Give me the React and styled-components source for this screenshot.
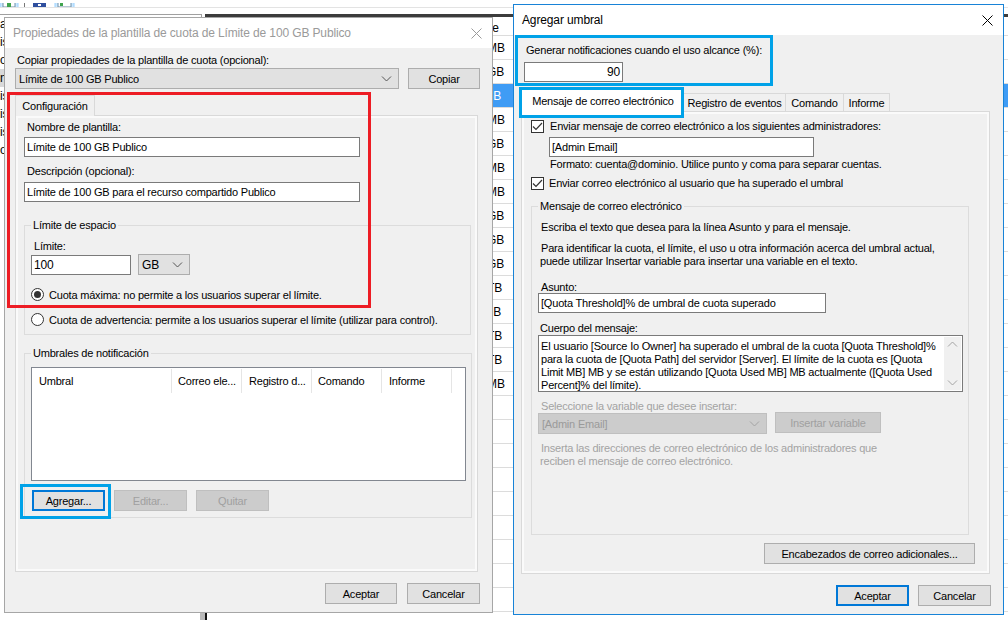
import React from 'react';
import styled, { createGlobalStyle } from 'styled-components';

const Global = createGlobalStyle`
  html, body { margin: 0; padding: 0; background: #fff; }
  body { font-family: "Liberation Sans", Arial, sans-serif; font-size: 11px; letter-spacing: -0.2px; color: #000; overflow: hidden; }
  * { box-sizing: border-box; }
`;

const Desktop = styled.div`position: relative; width: 1008px; height: 620px; overflow: hidden; background: #fff;`;
const Toolbar = styled.div`position: absolute; left: 0; top: 0; width: 1008px; height: 8px; border-bottom: 1px solid #e3e3e3; overflow: hidden;`;
const BackPane = styled.div`position: absolute; left: 0; top: 14px; width: 202px; height: 606px; border-top: 1px solid #a0a0a0; border-right: 1px solid #a0a0a0;`;
const BackRow = styled.div`height: 18px; line-height: 18px; padding-left: 0; font-size: 12px; background: ${p => (p.$on ? '#d9d9d9' : 'transparent')};`;
const BackTable = styled.div`position: absolute; left: 205px; top: 14px; width: 803px; bottom: 0; border-top: 3px solid #3c3c3c;`;
const BackHead = styled.div`height: 19px; line-height: 22px; padding-left: 284px; border-bottom: 1px solid #dcdcdc; background: #fff; font-size: 12px;`;
const BackCell = styled.div`
  height: 24px; line-height: 24px; border-bottom: 1px solid #dcdcdc; text-align: left;
  padding-left: ${p => p.$in ? 279 : 282}px; font-size: 12px; letter-spacing: 0;
  background: ${p => (p.$on ? '#3f9cf5' : '#fff')}; color: ${p => (p.$on ? '#fff' : '#000')};
`;
const Splitter = styled.div`position: absolute; left: 200px; top: 600px; width: 7px; height: 20px; background: #b8b8b8; border-right: 2px solid #111;`;

const Dialog = styled.div`
  position: absolute; left: ${p => p.$x}px; top: ${p => p.$y}px; width: ${p => p.$w}px; height: ${p => p.$h}px;
  background: #f0f0f0; border: 1px solid ${p => p.$c};
`;
const TitleBar = styled.div`
  height: 30px; background: #fff; display: flex; align-items: center; justify-content: space-between;
  padding: 0 ${p => p.$pr}px 0 ${p => p.$pl}px; color: ${p => p.$c}; font-size: 12px; letter-spacing: -0.13px; white-space: nowrap;
`;
const Body = styled.div`padding: ${p => p.$p};`;
const Txt = styled.div`
  height: ${p => p.$h || 14}px; line-height: ${p => p.$h || 14}px; white-space: nowrap;
  margin-top: ${p => p.$mt || 0}px; padding-left: ${p => p.$pl || 0}px;
  color: ${p => (p.$off ? '#a3a3a3' : '#000')};
`;
const Field = styled.div`
  width: ${p => p.$w}px; height: ${p => p.$h || 20}px; line-height: ${p => (p.$h || 20) - 2}px;
  margin-top: ${p => p.$mt || 0}px; margin-left: ${p => p.$ml || 0}px;
  background: #fff; border: 1px solid #7a7a7a; padding: 0 2px; white-space: nowrap; text-align: ${p => p.$right ? 'right' : 'left'};
  font-size: ${p => p.$fs || 11}px; flex: none;
`;
const Row = styled.div`
  display: flex; align-items: ${p => p.$al || 'flex-start'}; gap: ${p => p.$gap || 0}px;
  margin-top: ${p => p.$mt || 0}px; margin-left: ${p => p.$ml || 0}px; justify-content: ${p => p.$jc || 'flex-start'};
  padding-right: ${p => p.$pr || 0}px; white-space: nowrap;
`;
const Combo = styled.div`
  width: ${p => p.$w}px; height: 21px; flex: none; display: flex; align-items: center; justify-content: space-between;
  padding: 0 6px 0 3px; margin-top: ${p => p.$mt || 0}px; font-size: ${p => p.$fs || 11}px;
  background: ${p => (p.$off ? '#cccccc' : '#e1e1e1')}; border: 1px solid ${p => (p.$off ? '#bfbfbf' : '#adadad')};
  color: ${p => (p.$off ? '#9a9a9a' : '#000')};
`;
const Btn = styled.div`
  width: ${p => p.$w || 73}px; height: 21px; flex: none; display: flex; align-items: center; justify-content: center; white-space: nowrap;
  background: ${p => (p.$off ? '#cccccc' : '#e1e1e1')};
  border: ${p => (p.$main ? '2px solid #0078d7' : `1px solid ${p.$off ? '#bfbfbf' : '#adadad'}`)};
  color: ${p => (p.$off ? '#a0a0a0' : '#000')};
`;
const TabStrip = styled.div`display: flex; align-items: flex-end; height: ${p => p.$h}px; margin-top: ${p => p.$mt}px; padding-left: ${p => p.$pl || 0}px; position: relative; z-index: 1;`;
const Tab = styled.div`
  height: ${p => p.$h || 18}px; width: ${p => p.$w}px; display: flex; align-items: center; justify-content: center; white-space: nowrap;
  background: #f0f0f0; border: 1px solid #d9d9d9; border-left-width: ${p => p.$first ? 1 : 0}px; border-bottom: none;
`;
const ActiveTab = styled.div`
  height: 26px; width: ${p => p.$w}px; margin-bottom: -4px; display: flex; align-items: center; justify-content: center; white-space: nowrap;
  background: #fff; padding-bottom: 2px;
`;
const Panel = styled.div`
  height: ${p => p.$h}px; width: ${p => p.$w}px; margin-top: ${p => p.$mt || 0}px;
  border: 1px solid #d9d9d9; box-shadow: inset 0 0 0 2px #fafafa;
  padding: ${p => p.$p};
`;
const Group = styled.fieldset`
  margin: ${p => p.$mt}px 0 0 ${p => p.$ml || 0}px; width: ${p => p.$w}px; height: ${p => p.$h}px;
  border: 1px solid #dcdcdc; padding: 0 6px; min-width: 0; display: block;
`;
const Legend = styled.legend`
  padding: 0 2px; margin-left: 0; height: 14px; line-height: 15px; white-space: nowrap; font-size: 11px;
`;
const RadioDot = styled.span`
  width: 13px; height: 13px; border-radius: 50%; border: 1px solid #333; background: #fff; display: flex; align-items: center; justify-content: center; flex: none;
  &::after { content: ''; width: 7px; height: 7px; border-radius: 50%; background: ${p => (p.$on ? '#333' : 'transparent')}; }
`;
const Check = styled.span`width: 13px; height: 13px; flex: none; border: 1px solid #333; background: #fff; display: flex; align-items: center; justify-content: center;`;
const ListView = styled.div`width: 435px; height: 114px; margin-top: 7px; background: #fff; border: 1px solid #828790; display: flex; align-items: flex-start; padding-top: 1px;`;
const ColHead = styled.div`width: ${p => p.$w}px; height: 24px; line-height: 24px; padding-left: ${p => p.$pl}px; border-right: 1px solid #e5e5e5; white-space: nowrap; flex: none;`;
const MemoBox = styled.div`width: 425px; height: 57px; background: #fff; border: 1px solid #7a7a7a; display: flex; justify-content: space-between;`;
const MemoText = styled.div`padding: 4px 0 0 2px; line-height: 13px; white-space: nowrap;`;
const Scroll = styled.div`width: 17px; background: #f0f0f0; margin: 1px; display: flex; flex-direction: column; justify-content: space-between; align-items: center; padding: 4px 0;`;
const Note = styled.div`
  position: absolute; left: ${p => p.$x}px; top: ${p => p.$y}px; width: ${p => p.$w}px; height: ${p => p.$h}px;
  border: 3px solid ${p => p.$c || '#00a2e8'}; z-index: 5; pointer-events: none;
`;

const Chev = ({ up, c = '#555', w = 11 }) => (
  <svg width={w} height="6" viewBox="0 0 11 6"><path d={up ? 'M1 5.5 5.5 1 10 5.5' : 'M1 .5 5.5 5 10 .5'} fill="none" stroke={c} strokeWidth="1" /></svg>
);
const Close = ({ c }) => (
  <svg width="11" height="11" viewBox="0 0 11 11"><path d="M.5.5l10 10M10.5.5l-10 10" stroke={c} strokeWidth="1" /></svg>
);
const Tick = () => (
  <svg width="11" height="9" viewBox="0 0 11 9"><path d="M1 4.5 4 7.5 10 1" fill="none" stroke="#333" strokeWidth="1.2" /></svg>
);
const Icons = () => (
  <svg width="80" height="7" viewBox="0 0 80 7">
    <rect x="0" y="-2" width="18" height="8" fill="#cce8ff" stroke="#99d1ff" />
    <rect x="3" y="-1" width="12" height="5" fill="#fff" stroke="#6f8fa8" />
    <path d="M7-1h4v5H7z" fill="#3fa34d" />
    <rect x="24" y="-2" width="1" height="8" fill="#777" />
    <rect x="33" y="-2" width="13" height="7" fill="#2f4f9e" />
    <rect x="38" y="1" width="3" height="2" fill="#fff" />
    <rect x="55" y="-2" width="19" height="8" fill="#cce8ff" stroke="#99d1ff" />
    <rect x="58" y="-1" width="13" height="5" fill="#fff" stroke="#6f8fa8" />
    <path d="M60-1h3v4h-3z" fill="#3fa34d" />
  </svg>
);

const units = [['MB'],['GB'],['GB',1,1],['MB'],['GB'],['MB'],['MB'],['GB'],['GB'],['GB'],['TB'],['GB',1],['TB'],['TB'],['MB'],[''],[''],[''],[''],[''],[''],[''],[''],['']];
const side = ['a','is','o','n','is','is','is','o'];

export default function App() {
  return (
    <Desktop>
      <Global />
      <Toolbar><Icons /></Toolbar>
      <BackPane>
        {side.map((s, i) => <BackRow key={i} $on={i === 3}>{s}</BackRow>)}
      </BackPane>
      <BackTable>
        <BackHead>te</BackHead>
        {units.map(([u, inset, on], i) => <BackCell key={i} $in={inset} $on={on}>{u}</BackCell>)}
      </BackTable>
      <Splitter />

      <Dialog $x={4} $y={17} $w={489} $h={596} $c="#a6a6a6">
        <TitleBar $pl={8} $pr={10} $c="#9a9a9a">
          <span>Propiedades de la plantilla de cuota de Límite de 100 GB Publico</span>
          <Close c="#9a9a9a" />
        </TitleBar>
        <Body $p="5px 12px 0 10px">
          <Txt $pl={2}>Copiar propiedades de la plantilla de cuota (opcional):</Txt>
          <Row $mt={1} $gap={9}>
            <Combo $w={384}>Límite de 100 GB Publico<Chev /></Combo>
            <Btn $w={72}>Copiar</Btn>
          </Row>
          <TabStrip $h={21} $mt={6}>
            <Tab $first $w={80} $h={21}>Configuración</Tab>
          </TabStrip>
          <Panel $w={463} $h={457} $mt={-1} $p="4px 0 0 8px">
            <Txt $pl={3}>Nombre de plantilla:</Txt>
            <Field $w={336} $mt={3}>Límite de 100 GB Publico</Field>
            <Txt $pl={3} $mt={7}>Descripción (opcional):</Txt>
            <Field $w={336} $mt={4}>Límite de 100 GB para el recurso compartido Publico</Field>
            <Group $mt={16} $w={447} $h={117}>
              <Legend>Límite de espacio</Legend>
              <Txt $pl={3} $mt={7}>Límite:</Txt>
              <Row $mt={1} $gap={7}>
                <Field $w={100} $mt={1} $fs={12}>100</Field>
                <Combo $w={52} $fs={12}>GB<Chev /></Combo>
              </Row>
              <Row $mt={13} $gap={5} $al="center"><RadioDot $on /><span>Cuota máxima: no permite a los usuarios superar el límite.</span></Row>
              <Row $mt={12} $gap={5} $al="center"><RadioDot /><span>Cuota de advertencia: permite a los usuarios superar el límite (utilizar para control).</span></Row>
            </Group>
            <Group $mt={11} $w={448} $h={172}>
              <Legend>Umbrales de notificación</Legend>
              <ListView>
                <ColHead $w={140} $pl={7}>Umbral</ColHead>
                <ColHead $w={70} $pl={6}>Correo ele...</ColHead>
                <ColHead $w={70} $pl={7}>Registro d...</ColHead>
                <ColHead $w={70} $pl={6}>Comando</ColHead>
                <ColHead $w={70} $pl={7}>Informe</ColHead>
              </ListView>
              <Row $mt={9} $ml={1} $gap={9}>
                <Btn $main>Agregar...</Btn>
                <Btn $off>Editar...</Btn>
                <Btn $off>Quitar</Btn>
              </Row>
            </Group>
          </Panel>
          <Row $mt={11} $gap={10} $jc="flex-end">
            <Btn $w={72}>Aceptar</Btn>
            <Btn>Cancelar</Btn>
          </Row>
        </Body>
      </Dialog>

      <Dialog $x={513} $y={4} $w={491} $h={611} $c="#1883d7">
        <TitleBar $pl={8} $pr={10} $c="#000">
          <span>Agregar umbral</span>
          <Close c="#000" />
        </TitleBar>
        <Body $p="8px 12px 0 7px">
          <Txt $pl={5}>Generar notificaciones cuando el uso alcance (%):</Txt>
          <Field $w={99} $mt={5} $ml={3} $right $fs={12}>90</Field>
          <TabStrip $h={22} $mt={7} $pl={1}>
            <ActiveTab $w={162}>Mensaje de correo electrónico</ActiveTab>
            <Tab $w={102}>Registro de eventos</Tab>
            <Tab $w={58}>Comando</Tab>
            <Tab $w={46}>Informe</Tab>
          </TabStrip>
          <Panel $w={469} $h={463} $p="7px 0 0 9px">
            <Row $gap={6} $al="center"><Check><Tick /></Check><Txt>Enviar mensaje de correo electrónico a los siguientes administradores:</Txt></Row>
            <Field $w={265} $mt={4} $ml={18}>[Admin Email]</Field>
            <Txt $pl={19}>Formato: cuenta@dominio. Utilice punto y coma para separar cuentas.</Txt>
            <Row $mt={5} $gap={5} $al="center"><Check><Tick /></Check><Txt>Enviar correo electrónico al usuario que ha superado el umbral</Txt></Row>
            <Group $mt={9} $w={438} $h={336}>
              <Legend>Mensaje de correo electrónico</Legend>
              <Txt $pl={3} $mt={7}>Escriba el texto que desea para la línea Asunto y para el mensaje.</Txt>
              <Txt $pl={3} $mt={8} $h={13}>Para identificar la cuota, el límite, el uso u otra información acerca del umbral actual,</Txt>
              <Txt $pl={2} $h={13}>puede utilizar Insertar variable para insertar una variable en el texto.</Txt>
              <Txt $pl={3} $mt={12}>Asunto:</Txt>
              <Field $w={288} $mt={-1}>[Quota Threshold]% de umbral de cuota superado</Field>
              <Txt $pl={2} $mt={8}>Cuerpo del mensaje:</Txt>
              <MemoBox>
                <MemoText>
                  El usuario [Source Io Owner] ha superado el umbral de la cuota [Quota Threshold]%<br />
                  para la cuota de [Quota Path] del servidor [Server]. El límite de la cuota es [Quota<br />
                  Limit MB] MB y se están utilizando [Quota Used MB] MB actualmente ([Quota Used<br />
                  Percent]% del límite).
                </MemoText>
                <Scroll><Chev up c="#a3a3a3" /><Chev c="#a3a3a3" /></Scroll>
              </MemoBox>
              <Txt $off $pl={3} $mt={7}>Seleccione la variable que desee insertar:</Txt>
              <Row $gap={8} $mt={-1}>
                <Combo $off $w={229} $mt={1}>[Admin Email]<Chev c="#a3a3a3" /></Combo>
                <Btn $off $w={106}>Insertar variable</Btn>
              </Row>
              <Txt $off $pl={3} $mt={8} $h={13}>Inserta las direcciones de correo electrónico de los administradores que</Txt>
              <Txt $off $pl={2} $h={13}>reciben el mensaje de correo electrónico.</Txt>
            </Group>
            <Row $mt={8} $jc="flex-end" $pr={14}><Btn $w={211}>Encabezados de correo adicionales...</Btn></Row>
          </Panel>
          <Row $mt={11} $gap={9} $jc="flex-end">
            <Btn $main>Aceptar</Btn>
            <Btn>Cancelar</Btn>
          </Row>
        </Body>
      </Dialog>

      <Note $c="#ed1c24" $x={7} $y={92} $w={364} $h={216} />
      <Note $x={20} $y={484} $w={91} $h={35} />
      <Note $x={515} $y={35} $w={258} $h={51} />
      <Note $x={519} $y={87} $w={165} $h={31} />
    </Desktop>
  );
}
